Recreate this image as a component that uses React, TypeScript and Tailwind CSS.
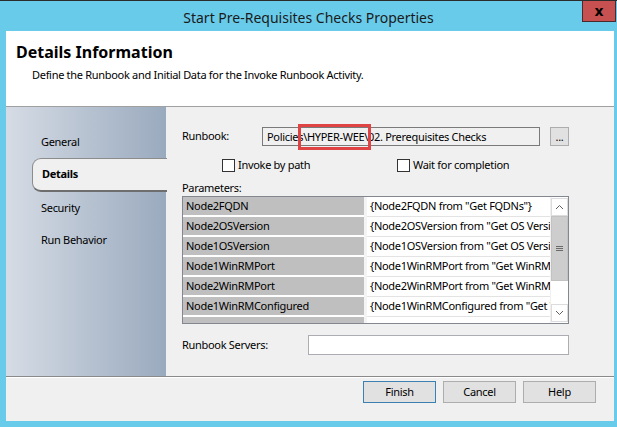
import React from 'react';

const rows: [string, string][] = [
  ['Node2FQDN', '{Node2FQDN from "Get FQDNs"}'],
  ['Node2OSVersion', '{Node2OSVersion from "Get OS Version"}'],
  ['Node1OSVersion', '{Node1OSVersion from "Get OS Version"}'],
  ['Node1WinRMPort', '{Node1WinRMPort from "Get WinRM Port"}'],
  ['Node2WinRMPort', '{Node2WinRMPort from "Get WinRM Port"}'],
  ['Node1WinRMConfigured', '{Node1WinRMConfigured from "Get WinRM Configured"}'],
  ['', ''],
];

function CheckBox({ label }: { label: string }): JSX.Element {
  return (
    <div className="flex items-center gap-[3px]">
      <div className="w-[13px] h-[13px] border border-[#333] bg-white" />
      <span>{label}</span>
    </div>
  );
}

function DialogButton({ label, focused }: { label: string; focused?: boolean }): JSX.Element {
  return (
    <div
      className={
        focused
          ? 'w-[73px] h-[22px] flex items-center justify-center bg-[#e1e1e1] border border-[#3c7fb1]'
          : 'w-[73px] h-[22px] flex items-center justify-center bg-[#e1e1e1] border border-[#adadad]'
      }
    >
      {label}
    </div>
  );
}

export default function App(): JSX.Element {
  return (
    <div
      className="relative w-[617px] h-[427px] overflow-hidden bg-[#69cbea] border-t border-[#2b2b2b] text-[11px] text-[#000]"
      style={{ fontFamily: '"Noto Sans", "Open Sans", sans-serif' }}
    >
      {/* Title bar */}
      <div className="h-[30px] flex items-center justify-center text-[14px] text-[#1a1a1a] pt-[3px]">
        Start Pre-Requisites Checks Properties
      </div>
      <div className="absolute top-0 left-[582px] w-[34px] h-[21px] bg-[#c75050] border border-[#4a2a2a] border-t-0 flex items-center justify-center">
        <span className="text-[14px] font-bold leading-none text-black" style={{ fontFamily: '"DejaVu Sans", sans-serif' }}>
          x
        </span>
      </div>

      {/* Client area */}
      <div className="ml-[6px] w-[608px] h-[390px] flex flex-col bg-[#f0f0f0] tracking-[-0.3px]">
        {/* Header */}
        <div className="h-[76px] bg-white border-b border-[#a0a0a0] pl-[10px] pt-[11px]">
          <div className="text-[16px] font-bold leading-[20px] tracking-normal">Details Information</div>
          <div className="pl-[16px] mt-[5px] leading-[16px]">
            Define the Runbook and Initial Data for the Invoke Runbook Activity.
          </div>
        </div>

        {/* Body */}
        <div className="h-[270px] flex border-b border-[#8a8a8a]">
          {/* Sidebar */}
          <div className="w-[160px] bg-gradient-to-r from-[#d6dce5] to-[#9aaabe] pt-[19px] flex flex-col">
            <div className="h-[32px] flex items-center pl-[35px]">General</div>
            <div className="h-[34px] ml-[26px] -mr-px flex items-center pl-[9px] bg-[#f0f0f0] rounded-l-[9px] border-l border-t border-[#8c8c8c] border-b-2 border-b-[#6e6e6e] font-bold relative z-10">
              Details
            </div>
            <div className="h-[32px] flex items-center pl-[35px]">Security</div>
            <div className="h-[32px] flex items-center pl-[35px]">Run Behavior</div>
          </div>

          {/* Content */}
          <div className="flex-1 pl-[16px] pt-[20px] flex flex-col">
            <div className="flex items-center h-[19px]">
              <div className="w-[80px]">Runbook:</div>
              <div className="relative w-[278px] h-[19px] bg-[#f0f0f0] border border-[#7a7a7a] flex items-center pl-[4px] pt-px whitespace-nowrap">
                Policies\HYPER-WEE\02. Prerequisites Checks
                <div className="absolute left-[35px] top-[-4px] w-[73px] h-[26px] border-[3px] border-[#e04343]" />
              </div>
              <div className="ml-[10px] w-[19px] h-[19px] bg-[#e1e1e1] border border-[#adadad] flex items-end justify-center pb-[3px] leading-none">
                ...
              </div>
            </div>

            <div className="flex items-center h-[13px] mt-[13px]">
              <div className="ml-[40px] w-[175px]">
                <CheckBox label="Invoke by path" />
              </div>
              <CheckBox label="Wait for completion" />
            </div>

            <div className="mt-[9px] leading-[14px]">Parameters:</div>

            {/* Parameters grid */}
            <div className="mt-[1px] w-[387px] h-[128px] border border-[#828790] bg-white flex overflow-hidden">
              <div className="w-[367px] flex flex-col">
                {rows.map(([name, value], i) => (
                  <div key={i} className="h-[20px] flex shrink-0">
                    <div className="w-[181px] h-[20px] bg-white">
                      <div className="h-[18px] bg-[#bfbfbf] flex items-center pl-[3px] whitespace-nowrap">{name}</div>
                    </div>
                    <div className="w-[3px] bg-[#f4f4f4]" />
                    <div className="flex-1 h-[20px] border-b border-[#e3e3e3] flex items-center pl-[3px] whitespace-nowrap overflow-hidden">
                      {value}
                    </div>
                  </div>
                ))}
              </div>
              {/* Scrollbar */}
              <div className="w-[18px] flex flex-col bg-white border-l border-[#f0f0f0] pt-px">
                <div className="h-[18px] border border-[#dcdcdc] flex items-center justify-center">
                  <svg width="9" height="6" viewBox="0 0 9 6">
                    <path d="M1 5 L4.5 1.5 L8 5" fill="none" stroke="#606060" strokeWidth="1" />
                  </svg>
                </div>
                <div className="h-[65px] bg-[#cdcdcd] border border-[#c2c2c2] flex flex-col items-center justify-center gap-[1px]">
                  <div className="w-[7px] h-px bg-[#6a6a6a]" />
                  <div className="w-[7px] h-px bg-[#6a6a6a]" />
                  <div className="w-[7px] h-px bg-[#6a6a6a]" />
                </div>
                <div className="flex-1" />
                <div className="h-[18px] mb-px border border-[#dcdcdc] flex items-center justify-center">
                  <svg width="9" height="6" viewBox="0 0 9 6">
                    <path d="M1 1 L4.5 4.5 L8 1" fill="none" stroke="#606060" strokeWidth="1" />
                  </svg>
                </div>
              </div>
            </div>

            <div className="mt-[11px] flex items-center h-[20px]">
              <div className="w-[126px]">Runbook Servers:</div>
              <div className="w-[261px] h-[20px] bg-white border border-[#abadb3]" />
            </div>
          </div>
        </div>

        {/* Footer */}
        <div className="flex-1 border-t border-white flex justify-end items-start gap-[7px] pt-[3px] pr-[18px]">
          <DialogButton label="Finish" focused />
          <DialogButton label="Cancel" />
          <DialogButton label="Help" />
        </div>
      </div>
    </div>
  );
}
